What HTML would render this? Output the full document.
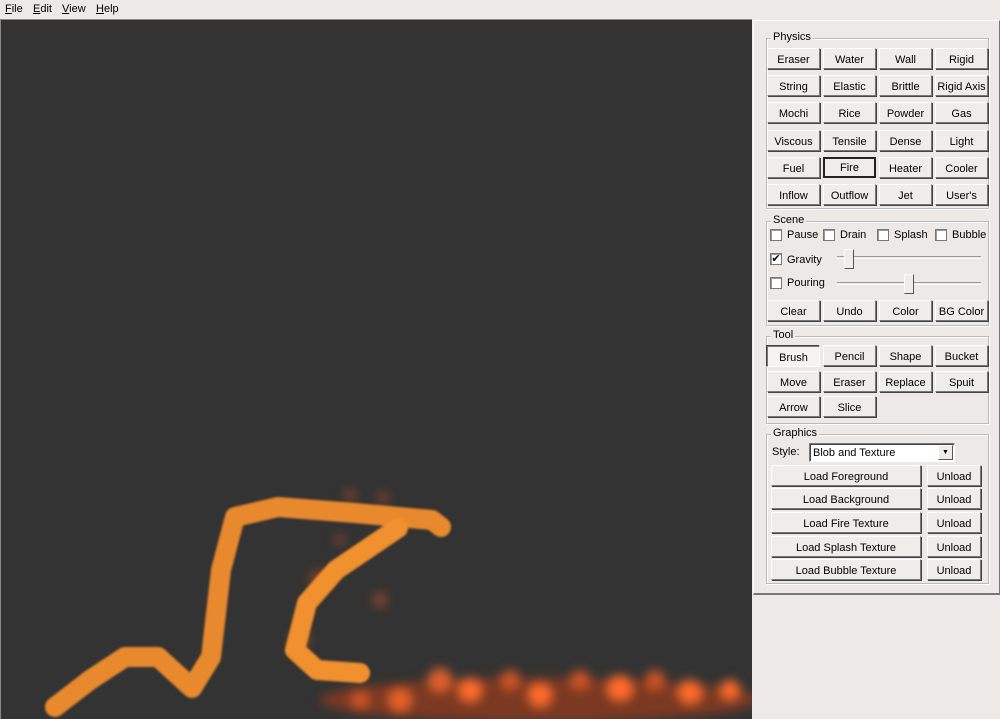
<!DOCTYPE html>
<html><head><style>
*{box-sizing:border-box;margin:0;padding:0}
body{width:1000px;height:719px;background:#ece9e6;font-family:"Liberation Sans",Tahoma,sans-serif;font-size:11px;color:#000;position:relative;overflow:hidden}
.menu{position:absolute;top:2px;left:0;height:16px}
.menu span{position:absolute;top:1px;font-size:11px}
.canvas{position:absolute;left:0;top:19px;width:752px;height:700px;background:#333;border-top:1px solid #888;border-left:1px solid #888}
.panel{position:absolute;left:753px;top:20px;width:247px;height:575px;border-top:1px solid #fff;border-left:1px solid #fff;border-bottom:2px solid #777;border-right:1px solid #777}
.grp{position:absolute;border:1px solid #bbb;box-shadow:inset 1px 1px 0 #fff,1px 1px 0 #fff}
.grp .t{position:absolute;top:-8px;left:4px;background:#ece9e6;padding:0 2px;font-size:11px}
.b{position:absolute;width:53px;height:21px;background:#efedea;border:1px solid;border-color:#fff #777 #777 #fff;box-shadow:1px 1px 0 #444;text-align:center;line-height:20px;font-size:11px;padding-top:1px}
.b.sel{border:2px solid #222;box-shadow:none;line-height:17px}
.b.dn{border-color:#777 #fff #fff #777;box-shadow:-1px -1px 0 #444;background:#f4f3f1}
.cb{position:absolute;width:12px;height:12px;background:#fff;border:1px solid #777;box-shadow:inset 1px 1px 0 #999}
.lb{position:absolute;font-size:11px}
.track{position:absolute;height:3px;border-top:1px solid #999;border-bottom:1px solid #fff}
.thumb{position:absolute;width:10px;height:20px;background:#efedea;border:1px solid;border-color:#fff #555 #555 #fff}
</style></head><body>
<div class="menu"><span style="left:5px"><u>F</u>ile</span><span style="left:33px"><u>E</u>dit</span><span style="left:62px"><u>V</u>iew</span><span style="left:96px"><u>H</u>elp</span></div>
<div class="canvas">
<svg width="752" height="700" viewBox="0 19 752 700" style="position:absolute;left:-1px;top:-1px">
<defs>
<filter id="bl" x="-20%" y="-50%" width="140%" height="200%"><feGaussianBlur stdDeviation="5"/></filter>
<filter id="bl2"><feGaussianBlur stdDeviation="1"/></filter>
</defs>
<g filter="url(#bl)">
<ellipse cx="540" cy="700" rx="220" ry="22" fill="#9a3a1a" opacity="0.7"/>
<circle cx="320" cy="580" r="10" fill="#c0502a" opacity="0.6"/>
<circle cx="300" cy="640" r="10" fill="#c0502a" opacity="0.5"/>
<circle cx="380" cy="600" r="8" fill="#c0502a" opacity="0.5"/>
<circle cx="350" cy="495" r="6" fill="#c0502a" opacity="0.5"/>
<circle cx="383" cy="498" r="6" fill="#c0502a" opacity="0.5"/>
<circle cx="340" cy="540" r="6" fill="#c0502a" opacity="0.4"/>
<circle cx="440" cy="680" r="12" fill="#ff6a2a" opacity="0.8"/>
<circle cx="470" cy="690" r="12" fill="#ff6a2a"/>
<circle cx="510" cy="680" r="10" fill="#e85a25" opacity="0.8"/>
<circle cx="540" cy="695" r="12" fill="#ff6a2a"/>
<circle cx="580" cy="680" r="10" fill="#e85a25" opacity="0.8"/>
<circle cx="620" cy="688" r="13" fill="#ff6a2a"/>
<circle cx="655" cy="680" r="10" fill="#e85a25" opacity="0.8"/>
<circle cx="690" cy="692" r="12" fill="#ff6a2a"/>
<circle cx="400" cy="700" r="12" fill="#ff6a2a" opacity="0.8"/>
<circle cx="730" cy="690" r="10" fill="#ff6a2a"/>
<circle cx="360" cy="700" r="10" fill="#e85a25" opacity="0.7"/>
</g>
<g fill="none" stroke="#e8892e" stroke-width="20" stroke-linecap="round" stroke-linejoin="round" filter="url(#bl2)">
<polyline points="55,707 90,680 125,657 158,657 192,688 211,657 221,570 235,517 278,507 355,513 432,520 441,527"/>
<polyline points="398,528 336,570 307,603 295,650 317,670 360,673" stroke="#f0902e"/>
</g>
<polyline points="350,712 740,712" stroke="#f5a040" stroke-width="5" fill="none" filter="url(#bl2)"/>
</svg>
</div>
<div class="panel">
<div class="grp" style="left:12px;top:17px;width:223px;height:171px"><span class="t">Physics</span></div>
<div class="grp" style="left:12px;top:200px;width:223px;height:105px"><span class="t">Scene</span></div>
<div class="grp" style="left:12px;top:315px;width:223px;height:88px"><span class="t">Tool</span></div>
<div class="grp" style="left:12px;top:413px;width:223px;height:150px"><span class="t">Graphics</span></div>
</div>
<div class="b" style="left:767px;top:48px">Eraser</div><div class="b" style="left:823px;top:48px">Water</div><div class="b" style="left:879px;top:48px">Wall</div><div class="b" style="left:935px;top:48px">Rigid</div>
<div class="b" style="left:767px;top:75px">String</div><div class="b" style="left:823px;top:75px">Elastic</div><div class="b" style="left:879px;top:75px">Brittle</div><div class="b" style="left:935px;top:75px">Rigid Axis</div>
<div class="b" style="left:767px;top:102px">Mochi</div><div class="b" style="left:823px;top:102px">Rice</div><div class="b" style="left:879px;top:102px">Powder</div><div class="b" style="left:935px;top:102px">Gas</div>
<div class="b" style="left:767px;top:130px">Viscous</div><div class="b" style="left:823px;top:130px">Tensile</div><div class="b" style="left:879px;top:130px">Dense</div><div class="b" style="left:935px;top:130px">Light</div>
<div class="b" style="left:767px;top:157px">Fuel</div><div class="b sel" style="left:823px;top:157px">Fire</div><div class="b" style="left:879px;top:157px">Heater</div><div class="b" style="left:935px;top:157px">Cooler</div>
<div class="b" style="left:767px;top:184px">Inflow</div><div class="b" style="left:823px;top:184px">Outflow</div><div class="b" style="left:879px;top:184px">Jet</div><div class="b" style="left:935px;top:184px">User's</div>
<div class="cb" style="left:770px;top:229px"></div><span class="lb" style="left:787px;top:229px">Pause</span>
<div class="cb" style="left:823px;top:229px"></div><span class="lb" style="left:840px;top:229px">Drain</span>
<div class="cb" style="left:877px;top:229px"></div><span class="lb" style="left:894px;top:229px">Splash</span>
<div class="cb" style="left:935px;top:229px"></div><span class="lb" style="left:952px;top:229px">Bubble</span>
<div class="cb" style="left:770px;top:253px;font-size:11px;line-height:10px;text-align:center">✔</div><span class="lb" style="left:787px;top:254px">Gravity</span>
<div class="cb" style="left:770px;top:277px"></div><span class="lb" style="left:787px;top:277px">Pouring</span>
<div class="track" style="left:837px;top:256px;width:144px"></div><div class="thumb" style="left:844px;top:249px"></div>
<div class="track" style="left:837px;top:282px;width:144px"></div><div class="thumb" style="left:904px;top:274px"></div>
<div class="b" style="left:767px;top:300px">Clear</div><div class="b" style="left:823px;top:300px">Undo</div><div class="b" style="left:879px;top:300px">Color</div><div class="b" style="left:935px;top:300px">BG Color</div>
<div class="b dn" style="left:767px;top:346px">Brush</div><div class="b" style="left:823px;top:345px">Pencil</div><div class="b" style="left:879px;top:345px">Shape</div><div class="b" style="left:935px;top:345px">Bucket</div>
<div class="b" style="left:767px;top:371px">Move</div><div class="b" style="left:823px;top:371px">Eraser</div><div class="b" style="left:879px;top:371px">Replace</div><div class="b" style="left:935px;top:371px">Spuit</div>
<div class="b" style="left:767px;top:396px">Arrow</div><div class="b" style="left:823px;top:396px">Slice</div>
<span class="lb" style="left:772px;top:446px">Style:</span>
<div style="position:absolute;left:809px;top:443px;width:146px;height:19px;background:#fff;border:1px solid;border-color:#777 #fff #fff #777;box-shadow:inset 1px 1px 0 #444"><span style="position:absolute;left:3px;top:3px">Blob and Texture</span><div style="position:absolute;right:1px;top:1px;width:15px;height:15px;background:#efedea;border:1px solid;border-color:#fff #555 #555 #fff;font-size:7px;text-align:center;line-height:13px">▼</div></div>
<div class="b" style="left:771px;top:465px;width:150px">Load Foreground</div><div class="b" style="left:927px;top:465px;width:54px">Unload</div>
<div class="b" style="left:771px;top:488px;width:150px">Load Background</div><div class="b" style="left:927px;top:488px;width:54px">Unload</div>
<div class="b" style="left:771px;top:512px;width:150px">Load Fire Texture</div><div class="b" style="left:927px;top:512px;width:54px">Unload</div>
<div class="b" style="left:771px;top:536px;width:150px">Load Splash Texture</div><div class="b" style="left:927px;top:536px;width:54px">Unload</div>
<div class="b" style="left:771px;top:559px;width:150px">Load Bubble Texture</div><div class="b" style="left:927px;top:559px;width:54px">Unload</div>
</body></html>
